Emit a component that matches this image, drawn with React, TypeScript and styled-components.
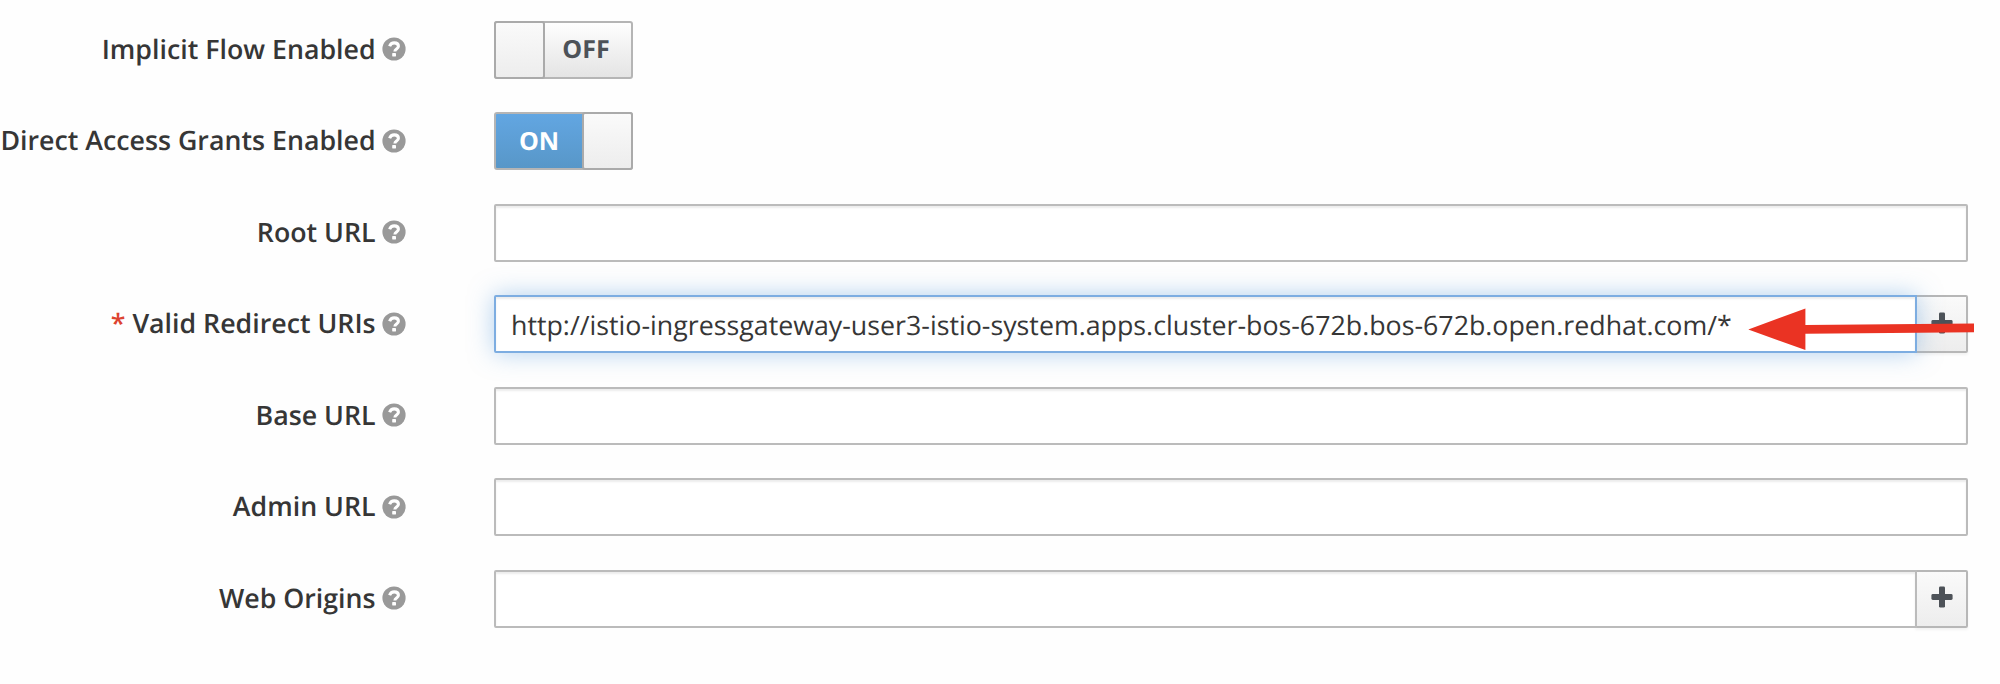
import React from "react";
import styled, { createGlobalStyle, css } from "styled-components";

const GlobalStyle = createGlobalStyle`
  body {
    margin: 0;
    background: #fff;
    overflow: hidden;
    font-family: "Open Sans", sans-serif;
    text-rendering: geometricPrecision;
  }
  * { box-sizing: border-box; }
`;

const Form = styled.form`
  position: relative;
  width: 2000px;
  height: 684px;
  padding-top: 20.5px;
  background: #fefefe;
`;

const Row = styled.div`
  display: flex;
  align-items: flex-start;
  height: 91.5px;
`;

const LabelCell = styled.div`
  display: flex;
  align-items: center;
  justify-content: flex-end;
  flex: none;
  width: 406px;
  height: 56px;
  margin-right: 88px;
  white-space: nowrap;
`;

const Label = styled.label`
  color: #363636;
  font-size: 26.75px;
  font-weight: 600;
  line-height: 36px;
`;

const Required = styled.span`
  color: #dd4330;
`;

const HelpIcon = styled.svg`
  display: block;
  flex: none;
  width: 24px;
  height: 24px;
  margin: 1px 0 0 6.4px;
`;

const Field = styled.div`
  display: flex;
  width: 1474px;
  height: 58px;
`;

const Input = styled.input<{ $grouped?: boolean; $active?: boolean }>`
  position: relative;
  flex: 1;
  min-width: 0;
  height: 58px;
  margin: 0;
  padding: 0 14px 0 15px;
  border: 2px solid #bbb;
  border-radius: ${(p) => (p.$grouped ? "2px 0 0 2px" : "2px")};
  outline: none;
  background: #fff;
  box-shadow: inset 0 2px 2px rgba(3, 3, 3, 0.075);
  color: #363636;
  font-family: inherit;
  font-size: 26.78px;
  text-rendering: geometricPrecision;
  ${(p) =>
    p.$active &&
    css`
      z-index: 1;
      border-color: #7dade1;
      box-shadow: inset 0 2px 2px rgba(3, 3, 3, 0.075), 0 0 24px rgba(102, 163, 224, 0.5);
    `}
`;

const AddButton = styled.button`
  display: flex;
  align-items: center;
  justify-content: center;
  flex: none;
  width: 53px;
  height: 58px;
  margin: 0 0 0 -2px;
  padding: 0 0 3px;
  border: 2px solid #b7b7b7;
  border-radius: 0 2px 2px 0;
  background: linear-gradient(#fafafa, #ededed);
  box-shadow: 0 2px 3px rgba(3, 3, 3, 0.05);
`;

const Switch = styled.div<{ $on: boolean }>`
  display: flex;
  flex-direction: ${(p) => (p.$on ? "row" : "row-reverse")};
  width: 139px;
  height: 58px;
  border: 2px solid #b5b5b5;
  border-radius: 3px;
  background: ${(p) => (p.$on ? "linear-gradient(#62a6e2, #5897c8)" : "linear-gradient(#fefefe, #e4e4e4)")};
`;

const SwitchText = styled.span<{ $on: boolean }>`
  flex: 1;
  padding-right: 2px;
  color: ${(p) => (p.$on ? "#fff" : "#4d5258")};
  font-size: 25px;
  font-weight: 700;
  line-height: ${(p) => (p.$on ? "54px" : "53px")};
  text-align: center;
`;

const Handle = styled.span`
  flex: none;
  width: 51px;
  height: 58px;
  margin: -2px;
  border: 2px solid #aaa;
  border-radius: 3px;
  background: linear-gradient(#fafafa, #ededed);
`;

const Arrow = styled.svg`
  position: absolute;
  z-index: 2;
  left: 1740px;
  top: 300px;
  width: 240px;
  height: 60px;
  pointer-events: none;
`;

const Help = () => (
  <HelpIcon viewBox="0 0 24 24" aria-hidden="true">
    <circle cx="12" cy="12" r="11.6" fill="#999" />
    <path
      d="M7.6 9.2C8.5 6.9 10 5.9 12.2 5.9c2.5 0 4.2 1.3 4.2 3.4 0 2.8-3.5 2.7-3.5 5.1"
      fill="none"
      stroke="#fff"
      strokeWidth="3.1"
    />
    <rect x="10.2" y="16" width="3.8" height="3.4" rx=".4" fill="#fff" />
  </HelpIcon>
);

const Plus = () => (
  <svg width="22" height="22" viewBox="0 0 22 22" aria-hidden="true">
    <rect x="8" y=".4" width="6" height="21.2" rx="1.4" fill="#4d5258" />
    <rect x=".4" y="8" width="21.2" height="6" rx="1.4" fill="#4d5258" />
  </svg>
);

type FormRowProps = { label: string; required?: boolean; children: React.ReactNode };

const FormRow = ({ label, required, children }: FormRowProps) => (
  <Row>
    <LabelCell>
      <Label>
        {required && <Required>* </Required>}
        {label}
      </Label>
      <Help />
    </LabelCell>
    <Field>{children}</Field>
  </Row>
);

const Toggle = ({ on }: { on: boolean }) => (
  <Switch $on={on}>
    <SwitchText $on={on}>{on ? "ON" : "OFF"}</SwitchText>
    <Handle />
  </Switch>
);

export default function App() {
  return (
    <>
      <GlobalStyle />
      <Form>
        <FormRow label="Implicit Flow Enabled">
          <Toggle on={false} />
        </FormRow>
        <FormRow label="Direct Access Grants Enabled">
          <Toggle on />
        </FormRow>
        <FormRow label="Root URL">
          <Input />
        </FormRow>
        <FormRow label="Valid Redirect URIs" required>
          <Input
            $grouped
            $active
            defaultValue="http://istio-ingressgateway-user3-istio-system.apps.cluster-bos-672b.bos-672b.open.redhat.com/*"
          />
          <AddButton type="button" aria-label="Add">
            <Plus />
          </AddButton>
        </FormRow>
        <FormRow label="Base URL">
          <Input />
        </FormRow>
        <FormRow label="Admin URL">
          <Input />
        </FormRow>
        <FormRow label="Web Origins">
          <Input $grouped />
          <AddButton type="button" aria-label="Add">
            <Plus />
          </AddButton>
        </FormRow>
        <Arrow viewBox="0 0 240 60" aria-hidden="true">
          <path d="M8.3 29.5 65.4 8.5V25L234 23.5V32.2L65.4 33.7V50Z" fill="#ea3323" />
        </Arrow>
      </Form>
    </>
  );
}
